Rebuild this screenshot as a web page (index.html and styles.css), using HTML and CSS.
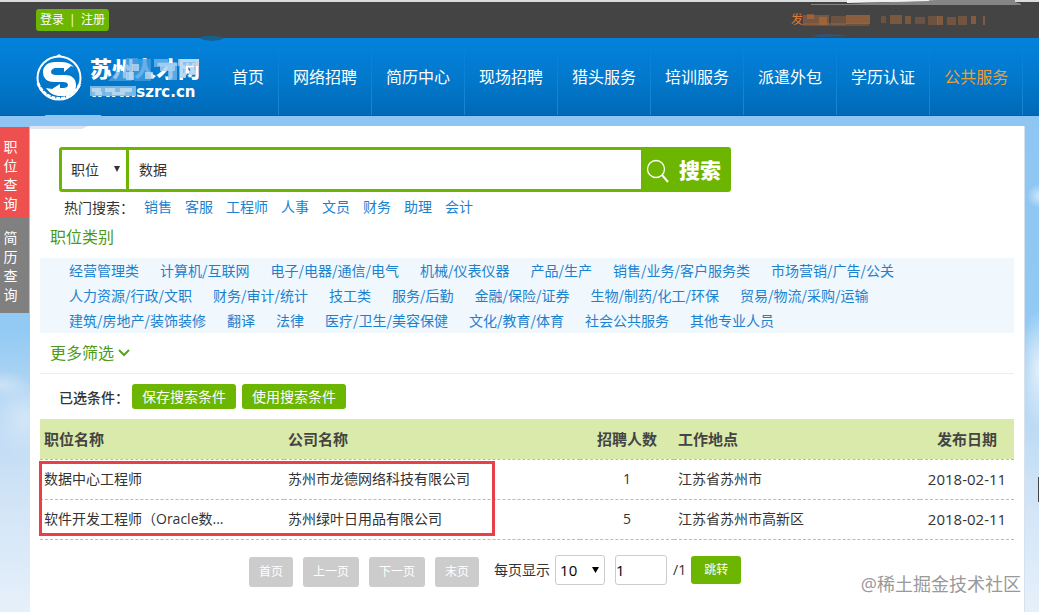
FILE: index.html
```html
<!DOCTYPE html>
<html lang="zh-CN">
<head>
<meta charset="utf-8">
<title>苏州人才网</title>
<link rel="stylesheet" href="styles.css">
</head>
<body>
<div class="page">
  <header>
    <div class="topbar">
      <div class="account"><a href="#">登录</a><span class="bar">|</span><a href="#">注册</a></div>
      <div class="hotline"><span>发</span>
        <svg width="182" height="14" viewBox="0 0 182 14" aria-hidden="true">
          <g fill="#c8743a"><path opacity=".4" d="M0 2h26v10H0z"/><path opacity=".45" d="M4 1h7v5H4zM16 4h8v8h-8z"/><path opacity=".3" d="M28 3h15v9H28z"/><path opacity=".55" d="M43 2h24v9H43z"/></g>
          <g fill="#a86a3e"><path opacity=".4" d="M0 10h66v3H0zM78 3h5v7h-5z"/><path opacity=".55" d="M87 2h12v9H87zM102 3h6v8h-6z"/><path opacity=".4" d="M112 4h10v7h-10zM125 3h10v9h-10z"/><path opacity=".6" d="M134 3h6v9h-6z"/><path opacity=".45" d="M144 4h9v8h-9zM155 3h9v9h-9z"/><path opacity=".6" d="M168 3h5v8h-5zM180 3h2v9h-2z"/></g>
        </svg>
      </div>
    </div>
    <div class="navbar">
      <a class="logo" href="#" aria-label="苏州人才网 www.szrc.cn">
        <svg width="46" height="46" viewBox="0 0 46 46" aria-hidden="true">
          <circle cx="23" cy="23" r="21.5" fill="none" stroke="#fff" stroke-width="2"/>
          <path d="M2 28a22 22 0 0 0 42 0" fill="none" stroke="#fff" stroke-width="3" stroke-dasharray="4 1"/>
          <path d="M19 2h8l-4-3z" fill="#fff"/>
          <path d="M38 12C34 8 30 7 24 7h-5C12 7 7 11 7 17c0 7 5 10 11 10h9c3 0 5 1 5 3s-2 3-5 3h-3v-4l-8 5-6-1c4 6 9 8 14 8h4c8 0 12-5 12-11 0-7-5-10-11-10h-9c-3 0-5-1-5-3s2-4 5-4h8v4l7-6z" fill="#fff"/>
        </svg>
        <span class="brand">
          <span class="brand-name">苏州人才网</span>
          <span class="brand-url">www.szrc.cn</span>
          <svg class="mosaic" width="112" height="48" viewBox="0 0 112 48" aria-hidden="true">
            <path fill="#5aa9e4" opacity=".65" d="M36 4h12v8h-6v15H18l8-9h8z"/>
            <path fill="#3f9ce0" opacity=".8" d="M44 5h17v22H44z"/>
            <path fill="#c0ddf3" opacity=".75" d="M42 10h7v7h-7zM36 18h8v8h-8zM55 18h8v7h-8z"/>
            <path fill="#79b9ea" opacity=".75" d="M64 5h14v8H64zM78 9h9v17h-9z"/>
            <path fill="#a8d1f1" opacity=".8" d="M70 11h15v6H70zM88 5h20v7H88zM90 12h6v12h-6zM100 13h6v8h-6z"/>
            <path fill="#7bb9e6" opacity=".95" d="M0 32h46v10H0z"/>
            <path fill="#c3dcf0" opacity=".8" d="M2 34h9v4H2zM15 34h10v4H15zM30 34h12v4H30zM5 38h7v3H5zM22 38h13v3H22z"/>
          </svg>
        </span>
      </a>
      <nav>
        <a href="#">首页</a><a href="#">网络招聘</a><a href="#">简历中心</a><a href="#">现场招聘</a><a href="#">猎头服务</a><a href="#">培训服务</a><a href="#">派遣外包</a><a href="#">学历认证</a><a class="active" href="#">公共服务</a>
      </nav>
    </div>
  </header>

  <div class="body">
    <aside class="tabs">
      <a class="tab selected" href="#">职位查询</a>
      <a class="tab" href="#">简历查询</a>
    </aside>
    <main>
      <form class="search">
        <label class="pick field-type"><select aria-label="搜索类型"><option>职位</option></select><svg class="arrow" width="6" height="6" viewBox="0 0 6 6" aria-hidden="true"><path d="M0 0h6L3 6z"/></svg></label>
        <input class="keyword" type="text" value="数据" aria-label="关键词">
        <button class="go" type="button">
          <svg width="24" height="26" viewBox="0 0 24 26" fill="none" stroke="#fff" aria-hidden="true"><circle cx="10" cy="12" r="8.5" stroke-width="1.3"/><path d="M16 18l6 7" stroke-width="2"/></svg>
          <span>搜索</span>
        </button>
      </form>
      <div class="hot"><span class="caption">热门搜索：</span><a href="#">销售</a><a href="#">客服</a><a href="#">工程师</a><a href="#">人事</a><a href="#">文员</a><a href="#">财务</a><a href="#">助理</a><a href="#">会计</a></div>
      <h2>职位类别</h2>
      <div class="categories">
        <a href="#">经营管理类</a><a href="#">计算机/互联网</a><a href="#">电子/电器/通信/电气</a><a href="#">机械/仪表仪器</a><a href="#">产品/生产</a><a href="#">销售/业务/客户服务类</a><a href="#">市场营销/广告/公关</a>
        <a href="#">人力资源/行政/文职</a><a href="#">财务/审计/统计</a><a href="#">技工类</a><a href="#">服务/后勤</a><a href="#">金融/保险/证券</a><a href="#">生物/制药/化工/环保</a><a href="#">贸易/物流/采购/运输</a>
        <a href="#">建筑/房地产/装饰装修</a><a href="#">翻译</a><a href="#">法律</a><a href="#">医疗/卫生/美容保健</a><a href="#">文化/教育/体育</a><a href="#">社会公共服务</a><a href="#">其他专业人员</a>
      </div>
      <div class="more"><a href="#">更多筛选<svg width="12" height="8" viewBox="0 0 12 8" fill="none" stroke="#58a51a" stroke-width="2" aria-hidden="true"><path d="M1 1l5 5 5-5"/></svg></a></div>
      <div class="chosen"><span class="caption">已选条件：</span><button class="green" type="button">保存搜索条件</button><button class="green" type="button">使用搜索条件</button></div>
      <div class="results">
        <table>
          <colgroup><col class="c-job"><col><col class="c-count"><col class="c-place"><col class="c-date"></colgroup>
          <thead><tr><th>职位名称</th><th>公司名称</th><th class="mid">招聘人数</th><th>工作地点</th><th class="mid">发布日期</th></tr></thead>
          <tbody>
            <tr><td>数据中心工程师</td><td>苏州市龙德网络科技有限公司</td><td class="mid">1</td><td>江苏省苏州市</td><td class="mid date">2018-02-11</td></tr>
            <tr><td>软件开发工程师（Oracle数...</td><td>苏州绿叶日用品有限公司</td><td class="mid">5</td><td>江苏省苏州市高新区</td><td class="mid date">2018-02-11</td></tr>
          </tbody>
        </table>
        <div class="highlight"></div>
      </div>
      <div class="pager">
        <div class="steps"><button type="button" disabled>首页</button><button type="button" disabled>上一页</button><button type="button" disabled>下一页</button><button type="button" disabled>末页</button></div>
        <label for="size">每页显示</label>
        <span class="pick size"><select id="size"><option>10</option></select><svg class="arrow" width="7" height="6" viewBox="0 0 7 6" aria-hidden="true"><path d="M0 0h7L3.5 6z"/></svg></span>
        <input class="number" type="text" value="1" aria-label="页码">
        <span class="total">/1</span>
        <button class="jump" type="button">跳转</button>
      </div>
    </main>
  </div>
  <svg class="scraps" width="1039" height="130" viewBox="0 0 1039 130" aria-hidden="true">
    <path d="M811 4h36l90-4h78v2l6 2v1H811z" fill="#858585"/>
    <path d="M847 0h82v1l-82 2z" fill="#f2f2f2"/>
    <path d="M199 38q6-3 13-2 8 0 13 2-6 3-13 3t-13-3z" fill="#16608e"/>
    <path d="M812 35q18-2 37 1l-30 1z" fill="#2f557d"/>
    <path d="M41 118l5-3h56l-4 2z" fill="#8fc6f0"/>
    <path d="M30 126h58l-6 3H30z" fill="#dfe5f3"/>
  </svg>
  <div class="edge"></div>
  <div class="watermark">@稀土掘金技术社区</div>
</div>
</body>
</html>
```
FILE: styles.css
```css
* { box-sizing: border-box; }
body {
  margin: 0;
  font: 14px/20px "Open Sans", "Noto Sans CJK SC", sans-serif;
  color: #333;
}
a { text-decoration: none; color: #1b82d0; }
button, input, select { font: inherit; color: inherit; margin: 0; padding: 0; border: 0; border-radius: 0; }

.page {
  position: relative;
  min-height: 100vh;
  display: flex;
  flex-direction: column;
  overflow: hidden;
  background:
    radial-gradient(ellipse 30px 14px at 2px 385px, #cde2f5, transparent),
    radial-gradient(ellipse 34px 40px at 24px 420px, #d3e6f7, transparent),
    radial-gradient(ellipse 12px 12px at 100% 196px, #cfe6f9, transparent),
    radial-gradient(ellipse 20px 60px at 100% 370px, #e4f0fb, transparent),
    linear-gradient(#8ec5f2 116px, #93caf3 330px, #b5d7f4 400px, #cfe3f6 490px, #e6f0fa 612px);
}
.topbar {
  display: flex;
  justify-content: space-between;
  align-items: center;
  height: 38px;
  padding: 0 54px 0 36px;
  background: #444;
  border-top: 2px solid #d9dcdc;
}
.account {
  display: flex;
  align-items: center;
  height: 22px;
  padding: 0 4px;
  border-radius: 3px;
  background: #6cb500;
  color: #fff;
  font-size: 12px;
}
.account a { color: #fff; }
.bar { width: 17px; padding-left: 5px; }
.hotline { display: flex; align-items: center; color: #e07b35; font-size: 12px; }

.navbar {
  display: flex;
  height: 78px;
  padding-left: 36px;
  background: linear-gradient(#0382dc, #0278cb 55%, #0069b7);
  border-bottom: 1px solid #0063ad;
}
.logo { display: flex; flex: none; align-items: center; width: 182px; gap: 8px; padding-top: 2px; color: #fff; }
.logo > svg { overflow: visible; }
.brand { position: relative; display: flex; flex-direction: column; }
.brand-name { font-size: 22px; line-height: 28px; font-weight: 900; }
.brand-url { font: bold 15px/20px "DejaVu Sans", sans-serif; }
.mosaic { position: absolute; left: 0; top: 0; }
nav { display: flex; }
nav a {
  padding: 0 14px;
  color: #fff;
  font-size: 16px;
  line-height: 79px;
  border-right: 1px solid #168ada;
  border-image: linear-gradient(#0382dc 20%, #1a86d0) 1;
}
nav .active { color: #e9a036; }

.body { display: flex; flex: 1; padding: 10px 14px 0 0; }
.tabs { width: 30px; flex: none; padding-top: 1px; }
.tab {
  display: block;
  width: 29px;
  height: 95px;
  padding: 10px 11px 0 3px;
  color: #fff;
  background: #808080;
  line-height: 19px;
  text-align: center;
  word-break: break-all;
}
.tab.selected { background: #ee5050; height: 91px; }
main {
  flex: 1;
  min-width: 0;
  padding: 21px 10px 0 10px;
  background: #fff;
  border-right: 1px solid #d5e1ec;
}
.search {
  display: flex;
  width: 672px;
  height: 45px;
  margin-left: 19px;
  border: 3px solid #6cb500;
  border-radius: 3px;
  background: #6cb500;
}
.pick { position: relative; display: block; }
.pick select { appearance: none; width: 100%; height: 100%; background: #fff; }
.arrow { position: absolute; top: 50%; pointer-events: none; }
.field-type { width: 64px; }
.field-type select { padding-left: 9px; }
.field-type .arrow { right: 6px; margin-top: -4px; fill: #333; }
.keyword { flex: 1; min-width: 0; margin-left: 3px; padding-left: 10px; background: #fff; }
.go {
  display: flex;
  align-items: center;
  gap: 9px;
  width: 87px;
  padding-left: 5px;
  background: #6cb500;
  color: #fff;
  font-size: 21px;
  font-weight: 900;
}
.caption { width: 67px; white-space: nowrap; font-family: "Noto Sans CJK TC", sans-serif; }
.hot { display: flex; gap: 13px; padding: 5px 0 0 24px; }
h2 { margin: 9px 0 10px 10px; font-size: 16px; line-height: 22px; font-weight: 400; color: #4c9a17; }
.categories {
  display: flex;
  flex-wrap: wrap;
  column-gap: 21px;
  padding-left: 29px;
  background: #f0f7fd;
  font-family: "Noto Sans CJK SC", sans-serif;
  line-height: 25px;
}
.more { padding-left: 10px; height: 41px; line-height: 40px; border-bottom: 1px solid #eee; }
.more a { display: inline-flex; align-items: center; gap: 4px; color: #4c9a17; font-size: 16px; }
.chosen { display: flex; align-items: center; gap: 6px; padding: 10px 0 10px 19px; }
.chosen .caption { font-weight: 500; }
.green { width: 104px; height: 25px; border-radius: 3px; background: #6cb500; color: #fff; }

.results { position: relative; }
table { width: 100%; table-layout: fixed; border-collapse: collapse; }
.c-job { width: 244px; }
.c-count { width: 94px; }
.c-place { width: 246px; }
.c-date { width: 94px; }
th, td { height: 40px; padding: 0 4px; text-align: left; border-bottom: 1px dashed #bbb; white-space: nowrap; }
th { font-size: 15px; background: #d9eaaa; color: #444; }
.mid { text-align: center; }
.date { font-size: 15px; }
.highlight { position: absolute; left: -1px; top: 42px; width: 456px; height: 75px; border: 3px solid #e94047; }

.pager { display: flex; align-items: center; margin: 13px 0 0 209px; }
.steps { display: flex; gap: 10px; padding-top: 4px; margin-right: 15px; }
.steps button { height: 30px; padding: 0 10px; border-radius: 3px; background: #ccc; color: #fff; font-size: 12px; }
.size { width: 50px; height: 30px; margin: 0 10px 0 5px; }
.size select { padding-left: 4px; border: 1px solid #ccc; border-radius: 3px; font-size: 15px; color: #000; }
.size .arrow { right: 6px; margin-top: -3px; }
.number { width: 52px; height: 30px; border: 1px solid #ccc; border-radius: 3px; font-size: 15px; color: #000; }
.total { margin: 0 5px 0 6px; }
.jump { width: 50px; height: 28px; border-radius: 3px; background: #6cb500; color: #fff; font-size: 12px; }

.scraps { position: absolute; left: 0; top: 0; pointer-events: none; }
.edge { position: absolute; right: 0; top: 477px; width: 1px; height: 25px; background: #444; }
.watermark {
  position: absolute;
  right: 18px;
  bottom: 16px;
  font-size: 18px;
  line-height: 24px;
  color: #999;
  text-shadow: 0 0 1px #fff;
}
```
